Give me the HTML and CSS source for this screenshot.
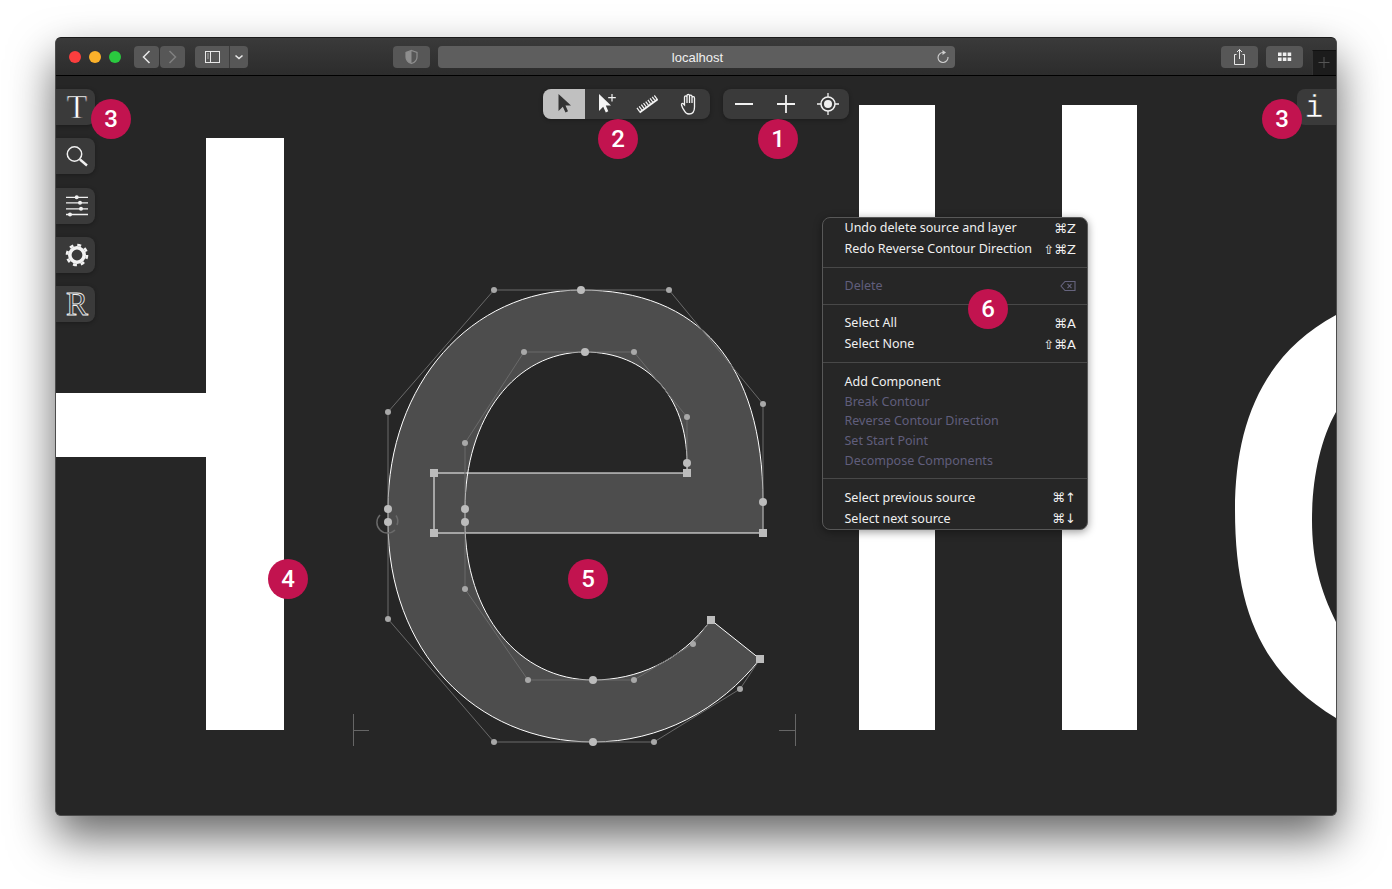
FILE: index.html
```html
<!DOCTYPE html>
<html lang="en">

<head>
    <meta charset="UTF-8">
    <meta name="viewport" content="width=device-width, initial-scale=1.0">
    <title>localhost</title>
    <link rel="stylesheet" href="styles.css">
</head>

<body>
    <div class="window">
        <!-- browser chrome -->
        <header class="titlebar">
            <div class="lights">
                <span class="light light-red"></span>
                <span class="light light-yellow"></span>
                <span class="light light-green"></span>
            </div>
            <div class="nav-buttons">
                <div class="chrome-btn nav-btn">
                    <svg width="25" height="22" viewBox="0 0 25 22"><path d="M15.5 5 L9.5 11 L15.5 17" fill="none" stroke="#e8e8e8" stroke-width="1.5"/></svg>
                </div>
                <div class="chrome-btn nav-btn">
                    <svg width="25" height="22" viewBox="0 0 25 22"><path d="M9.5 5 L15.5 11 L9.5 17" fill="none" stroke="#808080" stroke-width="1.5"/></svg>
                </div>
            </div>
            <div class="chrome-btn sidebar-btn">
                <div class="sidebar-icon">
                    <svg width="34" height="22" viewBox="0 0 34 22"><rect x="10.5" y="5.5" width="14" height="11" fill="none" stroke="#e8e8e8"/><path d="M15.5 5.5 V16.5" stroke="#e8e8e8"/><path d="M12 8 H14 M12 10 H14 M12 12 H14" stroke="#aaa"/></svg>
                </div>
                <div class="sidebar-caret">
                    <svg width="18" height="22" viewBox="0 0 18 22"><path d="M5.5 9.5 L9 12.5 L12.5 9.5" fill="none" stroke="#e8e8e8" stroke-width="1.6"/></svg>
                </div>
            </div>
            <div class="chrome-btn shield-btn">
                <svg width="37" height="22" viewBox="0 0 37 22"><path d="M18.5 4.5 L24 6.5 V11 C24 14.5 21.5 16.5 18.5 17.5 C15.5 16.5 13 14.5 13 11 V6.5 Z" fill="none" stroke="#8e8e8e" stroke-width="1.2"/><path d="M18.5 4.5 L13 6.5 V11 C13 14.5 15.5 16.5 18.5 17.5 Z" fill="#8e8e8e"/></svg>
            </div>
            <div class="url-bar">
                <span class="url-text">localhost</span>
                <svg class="reload" width="14" height="14" viewBox="0 0 14 14"><path d="M7 2.5 A5 5 0 1 0 12 7" fill="none" stroke="#d0d0d0" stroke-width="1.1"/><path d="M6.5 0 L10 2.5 L6.5 5 Z" fill="#d0d0d0"/></svg>
            </div>
            <div class="chrome-btn share-btn">
                <svg width="37" height="22" viewBox="0 0 37 22"><path d="M15.5 8.5 H13.5 V18.5 H23.5 V8.5 H21.5" fill="none" stroke="#e8e8e8"/><path d="M18.5 13 V3.5 M16 6 L18.5 3.5 L21 6" fill="none" stroke="#e8e8e8"/></svg>
            </div>
            <div class="chrome-btn grid-btn">
                <svg width="37" height="22" viewBox="0 0 37 22"><path d="M12 6.5 h3.6 v3.6 h-3.6 z M16.8 6.5 h3.6 v3.6 h-3.6 z M21.6 6.5 h3.6 v3.6 h-3.6 z M12 11.5 h3.6 v3.6 h-3.6 z M16.8 11.5 h3.6 v3.6 h-3.6 z M21.6 11.5 h3.6 v3.6 h-3.6 z" fill="#f0f0f0"/></svg>
            </div>
            <div class="new-tab">
                <svg width="24" height="24" viewBox="0 0 24 24"><path d="M11 6 V17 M5.5 11.5 H16.5" stroke="#555"/></svg>
            </div>
        </header>

        <main class="canvas">
            <!-- glyphs on the canvas -->
            <svg class="glyphs" width="1280" height="739" viewBox="56 76 1280 739">
                <path class="glyph" d="M206 138 H284 V730 H206 V457 H56 V393 H206 Z"/>
                <rect class="glyph" x="859" y="105" width="76" height="625"/>
                <rect class="glyph" x="1062" y="105" width="75" height="625"/>
                <path class="glyph" d="M1336 315 C1262 355 1235 425 1235 510 C1235 615 1265 675 1336 718 V622 C1320 590 1312 560 1312 520 C1312 480 1320 440 1336 412 Z"/>

                <path class="outline" d="M581 290 C699 290 763 364 763 502 V533 H434 V473 H687 V463 C687 396 646 352 585 352 C515 352 465 418 465 509 V522 C465 614 519 680 593 680 C636 680 680 662 711 620 L760 659 C720 710 660 742 593 742 C474 742 388 650 388 522 V509 C388 384 471 290 581 290 Z"/>

                <path class="handles" d="M494 290 H669 L763 404 V533 M388 509 V412 L494 290 M687 463 V417 L634 352 H524 L465 443 V522 V589 L528 680 H634 L693 644 L711 620 M760 659 L740 689 L654 742 H494 L388 619 V509"/>
                <path class="metric" d="M353.500 714 V746 M353 730.500 H369 M795.500 714 V746 M779 730.500 H795"/>
                <path class="start-ring" d="M380 515 A10 10 0 0 0 395 530 M396 515.500 A10 10 0 0 1 397 525"/>

                <g class="off-curve">
                    <circle cx="494" cy="290" r="3"/><circle cx="669" cy="290" r="3"/>
                    <circle cx="763" cy="404" r="3"/><circle cx="388" cy="412" r="3"/>
                    <circle cx="524" cy="352" r="3"/><circle cx="634" cy="352" r="3"/>
                    <circle cx="687" cy="417" r="3"/><circle cx="465" cy="443" r="3"/>
                    <circle cx="465" cy="589" r="3"/><circle cx="388" cy="619" r="3"/>
                    <circle cx="528" cy="680" r="3"/><circle cx="634" cy="680" r="3"/>
                    <circle cx="693" cy="644" r="3"/><circle cx="740" cy="689" r="3"/>
                    <circle cx="494" cy="742" r="3"/><circle cx="654" cy="742" r="3"/>
                </g>
                <g class="on-curve">
                    <circle cx="581" cy="290" r="4"/><circle cx="585" cy="352" r="4"/>
                    <circle cx="687" cy="463" r="4"/><circle cx="763" cy="502" r="4"/>
                    <circle cx="388" cy="509" r="4"/><circle cx="465" cy="509" r="4"/>
                    <circle cx="388" cy="522" r="4"/><circle cx="465" cy="522" r="4"/>
                    <circle cx="593" cy="680" r="4"/><circle cx="593" cy="742" r="4"/>
                </g>
                <g class="on-curve">
                    <rect x="430" y="469" width="8" height="8"/><rect x="683" y="469" width="8" height="8"/>
                    <rect x="430" y="529" width="8" height="8"/><rect x="759" y="529" width="8" height="8"/>
                    <rect x="707" y="616" width="8" height="8"/><rect x="756" y="655" width="8" height="8"/>
                </g>
            </svg>

            <!-- left tools -->
            <nav class="side-tools">
                <div class="side-btn"><span class="letter-t">T</span></div>
                <div class="side-btn">
                    <svg width="24" height="24" viewBox="0 0 24 24"><circle cx="9.500" cy="10" r="7.200" fill="none" stroke="#f0f0f0" stroke-width="1.500"/><path d="M15 15.500 L22 21.500" stroke="#f0f0f0" stroke-width="2.400"/></svg>
                </div>
                <div class="side-btn">
                    <svg width="24" height="24" viewBox="0 0 24 24"><path d="M1 3.300 H23 M1 8.800 H23 M1 14.800 H23" stroke="#f0f0f0" stroke-width="1.300"/><path d="M1 20.500 H23" stroke="#f0f0f0" stroke-width="1.700"/><circle class="knob" cx="11.700" cy="3.300" r="2"/><circle class="knob" cx="15" cy="8.800" r="2"/><circle class="knob" cx="16" cy="14.800" r="2"/><circle class="knob" cx="5" cy="20.500" r="2"/></svg>
                </div>
                <div class="side-btn">
                    <svg width="24" height="24" viewBox="0 0 24 24"><circle cx="12" cy="12" r="7.200" fill="none" stroke="#f2f2f2" stroke-width="3.600"/><circle cx="12" cy="12" r="10" fill="none" stroke="#f2f2f2" stroke-width="2.600" stroke-dasharray="3.900 3.950"/></svg>
                </div>
                <div class="side-btn"><span class="letter-r">R</span></div>
            </nav>

            <div class="top-tools">
                <div class="tool-group tool-group-edit">
                    <div class="tool tool-active">
                        <svg width="24" height="24" viewBox="0 0 24 24"><path d="M6.500 2 V19 L10.800 14.800 L13.500 20.500 L16 19.300 L13.500 13.500 H19 Z" fill="#333"/></svg>
                    </div>
                    <div class="tool">
                        <svg width="24" height="24" viewBox="0 0 24 24"><path d="M5 2 V19 L9.200 14.800 L11.800 20.500 L14.300 19.300 L11.800 13.500 H17 Z" fill="#f4f4f4"/><path d="M18 2 V9.500 M14.200 5.700 H21.800" stroke="#f4f4f4" stroke-width="1.200"/></svg>
                    </div>
                    <div class="tool">
                        <svg width="24" height="24" viewBox="0 0 24 24"><g transform="rotate(-36 12 12)"><path d="M1 14.500 H23" stroke="#f4f4f4" stroke-width="2"/><path d="M1 11.500 H23" stroke="#f4f4f4" stroke-width="4.500" stroke-dasharray="1.200 1.500"/><path d="M23 9.500 V15" stroke="#f4f4f4" stroke-width="1.200"/></g></svg>
                    </div>
                    <div class="tool">
                        <svg width="24" height="24" viewBox="0 0 24 24"><path d="M7.500 19 C6 17 5 15 4.500 13 C4.200 11.500 5.500 11 6.500 12 L7.500 13 V5 C7.500 3.500 10 3.500 10 5 V3.500 C10 2 12.500 2 12.500 3.500 V4 C12.500 2.800 15 2.800 15 4.500 V5.500 C15 4.300 17.500 4.300 17.500 6 V15 C17.500 19 15.500 22 12 22 C10 22 8.500 21 7.500 19 Z M10 5 V11 M12.500 4 V11 M15 5.500 V11" fill="none" stroke="#f4f4f4" stroke-width="1.300"/></svg>
                    </div>
                </div>
                <div class="tool-group">
                    <div class="tool">
                        <svg width="24" height="24" viewBox="0 0 24 24"><path d="M3 12 H21" stroke="#f0f0f0" stroke-width="1.800"/></svg>
                    </div>
                    <div class="tool">
                        <svg width="24" height="24" viewBox="0 0 24 24"><path d="M3 12 H21 M12 3 V21" stroke="#f0f0f0" stroke-width="1.800"/></svg>
                    </div>
                    <div class="tool">
                        <svg width="24" height="24" viewBox="0 0 24 24"><circle cx="12" cy="12" r="7" fill="none" stroke="#f0f0f0" stroke-width="1.500"/><circle cx="12" cy="12" r="4" fill="#f0f0f0"/><path d="M12 1 V5 M12 19 V23 M1 12 H5 M19 12 H23" stroke="#f0f0f0" stroke-width="1.300"/></svg>
                    </div>
                </div>
            </div>

            <div class="info-tab"><span class="letter-i">i</span></div>

            <!-- context menu -->
            <div class="menu">
                <div class="menu-group menu-first">
                    <div class="menu-row"><span>Undo delete source and layer</span><span class="keys">⌘Z</span></div>
                    <div class="menu-row"><span>Redo Reverse Contour Direction</span><span class="keys">⇧⌘Z</span></div>
                </div>
                <div class="menu-group">
                    <div class="menu-row disabled"><span>Delete</span>
                        <svg width="16" height="12" viewBox="0 0 16 12"><path d="M5 1.500 H15 V10.500 H5 L1 6 Z M7.500 3.800 L11.500 8.200 M11.500 3.800 L7.500 8.200" fill="none" stroke="#66647e" stroke-width="1.100"/></svg>
                    </div>
                </div>
                <div class="menu-group">
                    <div class="menu-row"><span>Select All</span><span class="keys">⌘A</span></div>
                    <div class="menu-row"><span>Select None</span><span class="keys">⇧⌘A</span></div>
                </div>
                <div class="menu-group menu-tight">
                    <div class="menu-row"><span>Add Component</span></div>
                    <div class="menu-row disabled"><span>Break Contour</span></div>
                    <div class="menu-row disabled"><span>Reverse Contour Direction</span></div>
                    <div class="menu-row disabled"><span>Set Start Point</span></div>
                    <div class="menu-row disabled"><span>Decompose Components</span></div>
                </div>
                <div class="menu-group menu-last">
                    <div class="menu-row"><span>Select previous source</span><span class="keys">⌘↑</span></div>
                    <div class="menu-row"><span>Select next source</span><span class="keys">⌘↓</span></div>
                </div>
            </div>

            <!-- numbered callouts -->
            <div class="badge badge-zoom">1</div>
            <div class="badge badge-tools">2</div>
            <div class="badge badge-left">3</div>
            <div class="badge badge-right">3</div>
            <div class="badge badge-glyph">4</div>
            <div class="badge badge-edit">5</div>
            <div class="badge badge-menu">6</div>
        </main>
    </div>
</body>

</html>
```

FILE: styles.css
```css
body {
    margin: 0;
    height: 889px;
    box-sizing: border-box;
    padding: 37px 0 0 55px;
    overflow: hidden;
    background-color: #fff;
    font-family: "Liberation Sans", Arial, sans-serif;
}

.window {
    width: 1282px;
    height: 779px;
    box-sizing: border-box;
    display: flex;
    flex-direction: column;
    border: 1px solid #4c4c4c;
    border-top-color: #1a1a1a;
    border-radius: 6px;
    background-color: #262626;
    box-shadow: 0 21px 45px rgba(0, 0, 0, 0.6);
}

/* browser chrome */
.titlebar {
    position: relative;
    flex: none;
    height: 38px;
    box-sizing: border-box;
    display: flex;
    align-items: center;
    padding-left: 13px;
    border-radius: 5px 5px 0 0;
    background: linear-gradient(#3a3a3a, #2c2c2c);
    border-bottom: 1px solid #000;
}

.lights {
    display: flex;
    gap: 8px;
    margin-right: 13px;
}

.light {
    width: 12px;
    height: 12px;
    border-radius: 50%;
}

.light-red {
    background-color: #fb3e3e;
}

.light-yellow {
    background-color: #fbb12a;
}

.light-green {
    background-color: #2ac93f;
}

.chrome-btn {
    height: 22px;
    border-radius: 4px;
    background-color: #575757;
    display: flex;
    flex: none;
}

.nav-buttons {
    display: flex;
    gap: 1px;
    margin-right: 10px;
}

.nav-btn {
    width: 25px;
}

.sidebar-btn {
    width: 53px;
    margin-right: 145px;
}

.sidebar-icon {
    width: 34px;
    height: 22px;
}

.sidebar-caret {
    width: 18px;
    height: 22px;
    border-left: 1px solid #3c3c3c;
}

.shield-btn {
    width: 37px;
    margin-right: 8px;
}

.url-bar {
    position: relative;
    width: 517px;
    height: 22px;
    flex: none;
    margin-right: 266px;
    border-radius: 4px;
    background-color: #5e5e5e;
    display: flex;
    align-items: center;
    justify-content: center;
}

.url-text {
    padding: 1px 0 0 2px;
    font-size: 13px;
    color: #f0f0f0;
}

.reload {
    position: absolute;
    right: 5px;
    top: 4px;
}

.share-btn {
    width: 37px;
    margin-right: 8px;
}

.grid-btn {
    width: 37px;
}

.new-tab {
    width: 24px;
    height: 25px;
    flex: none;
    align-self: flex-end;
    margin-left: 9px;
    box-sizing: border-box;
    background-color: #1c1c1c;
    border-left: 1px solid #333;
    border-top: 1px solid #111;
}

/* canvas */
.canvas {
    position: relative;
    flex: 1;
    overflow: hidden;
    border-radius: 0 0 5px 5px;
    background-color: #262626;
}

.glyphs {
    position: absolute;
    left: 0;
    top: 0;
}

.glyph {
    fill: #fff;
}

.outline {
    fill: #4d4d4d;
    stroke: #fff;
    stroke-width: 1;
}

.handles {
    fill: none;
    stroke: #6a6a6a;
    stroke-width: 1;
}

.metric {
    fill: none;
    stroke: #666;
    stroke-width: 1;
}

.start-ring {
    fill: none;
    stroke: #6a6a6a;
    stroke-width: 1.500;
}

.off-curve {
    fill: #a8a8a8;
}

.on-curve {
    fill: #bcbcbc;
}

/* left tools */
.side-tools {
    position: absolute;
    left: 0;
    top: 13px;
    display: flex;
    flex-direction: column;
    gap: 13.300px;
}

.side-btn {
    width: 39px;
    height: 36px;
    box-sizing: border-box;
    padding-left: 3px;
    display: flex;
    align-items: center;
    justify-content: center;
    border-radius: 0 8px 8px 0;
    background-color: #3a3a3a;
    box-shadow: 0 1px 4px rgba(0, 0, 0, 0.3);
}

.knob {
    fill: #f0f0f0;
}

.letter-t {
    font-family: "Liberation Serif", serif;
    font-size: 34px;
    line-height: 36px;
    color: #fff;
    -webkit-text-stroke: 0.600px #3a3a3a;
}

.letter-r {
    font-family: "Liberation Serif", serif;
    font-size: 33px;
    line-height: 36px;
    color: #3a3a3a;
    -webkit-text-stroke: 0.800px #f0f0f0;
}

.info-tab {
    position: absolute;
    right: 0;
    top: 13px;
    width: 39px;
    height: 36px;
    box-sizing: border-box;
    padding: 4px 5px 0 0;
    display: flex;
    align-items: center;
    justify-content: center;
    border-radius: 8px 0 0 8px;
    background-color: #3a3a3a;
}

.letter-i {
    font-family: "Liberation Mono", monospace;
    font-size: 31px;
    line-height: 32px;
    color: #fff;
    -webkit-text-stroke: 0.500px #3a3a3a;
}

/* top tools */
.top-tools {
    position: absolute;
    left: 487px;
    top: 13px;
    display: flex;
    gap: 13px;
}

.tool-group {
    display: flex;
    height: 30px;
    border-radius: 8px;
    overflow: hidden;
    background-color: #3a3a3a;
    box-shadow: 0 1px 4px rgba(0, 0, 0, 0.3);
}

.tool {
    width: 42px;
    display: flex;
    align-items: center;
    justify-content: center;
}

.tool-group-edit .tool {
    width: 41.750px;
}

.tool-active {
    background-color: #c0c0c0;
}

/* context menu */
.menu {
    position: absolute;
    left: 766px;
    top: 141px;
    width: 266px;
    height: 313px;
    box-sizing: border-box;
    border: 1px solid #585858;
    border-radius: 8px;
    background-color: #262626;
    box-shadow: 0 2px 8px rgba(0, 0, 0, 0.4);
    font-family: "Noto Sans", sans-serif;
    font-size: 12.500px;
    color: #f0f0f0;
}

.menu-group {
    padding: 7px 11px 8px 21.500px;
    border-bottom: 1px solid #484848;
}

.menu-first {
    padding-top: 0;
    margin-top: -1px;
}

.menu-tight {
    padding-top: 8.500px;
    padding-bottom: 7.500px;
}

.menu-last {
    padding-top: 8px;
    padding-bottom: 0;
    border-bottom: none;
}

.menu-row {
    height: 21px;
    display: flex;
    align-items: center;
    justify-content: space-between;
}

.menu-tight .menu-row {
    height: 19.750px;
}

.disabled {
    color: #605e7c;
}

.keys {
    margin-top: 1px;
    font-family: "DejaVu Sans", sans-serif;
    font-size: 13px;
}

/* numbered callouts */
.badge {
    position: absolute;
    width: 40px;
    height: 40px;
    border-radius: 50%;
    background-color: #c2134f;
    color: #fff;
    font-family: Roboto, sans-serif;
    font-weight: 500;
    font-size: 24px;
    line-height: 40px;
    text-align: center;
}

.badge-zoom {
    left: 702px;
    top: 43px;
}

.badge-tools {
    left: 542px;
    top: 43px;
}

.badge-left {
    left: 35px;
    top: 23px;
}

.badge-right {
    left: 1206px;
    top: 23px;
}

.badge-glyph {
    left: 212px;
    top: 483px;
}

.badge-edit {
    left: 512px;
    top: 483px;
}

.badge-menu {
    left: 912px;
    top: 213px;
}
```
